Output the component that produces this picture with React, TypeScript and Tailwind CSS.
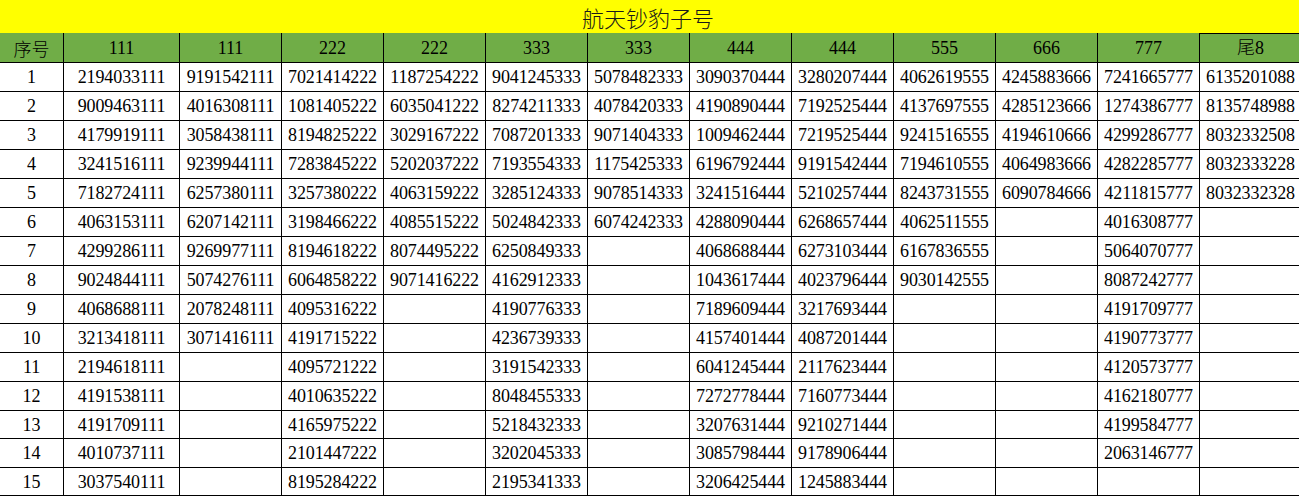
const headers = ["序号", "111", "111", "222", "222", "333", "333", "444", "444", "555", "666", "777", "尾8"];

const rows: string[][] = [
  ["1", "2194033111", "9191542111", "7021414222", "1187254222", "9041245333", "5078482333", "3090370444", "3280207444", "4062619555", "4245883666", "7241665777", "6135201088"],
  ["2", "9009463111", "4016308111", "1081405222", "6035041222", "8274211333", "4078420333", "4190890444", "7192525444", "4137697555", "4285123666", "1274386777", "8135748988"],
  ["3", "4179919111", "3058438111", "8194825222", "3029167222", "7087201333", "9071404333", "1009462444", "7219525444", "9241516555", "4194610666", "4299286777", "8032332508"],
  ["4", "3241516111", "9239944111", "7283845222", "5202037222", "7193554333", "1175425333", "6196792444", "9191542444", "7194610555", "4064983666", "4282285777", "8032333228"],
  ["5", "7182724111", "6257380111", "3257380222", "4063159222", "3285124333", "9078514333", "3241516444", "5210257444", "8243731555", "6090784666", "4211815777", "8032332328"],
  ["6", "4063153111", "6207142111", "3198466222", "4085515222", "5024842333", "6074242333", "4288090444", "6268657444", "4062511555", "", "4016308777", ""],
  ["7", "4299286111", "9269977111", "8194618222", "8074495222", "6250849333", "", "4068688444", "6273103444", "6167836555", "", "5064070777", ""],
  ["8", "9024844111", "5074276111", "6064858222", "9071416222", "4162912333", "", "1043617444", "4023796444", "9030142555", "", "8087242777", ""],
  ["9", "4068688111", "2078248111", "4095316222", "", "4190776333", "", "7189609444", "3217693444", "", "", "4191709777", ""],
  ["10", "3213418111", "3071416111", "4191715222", "", "4236739333", "", "4157401444", "4087201444", "", "", "4190773777", ""],
  ["11", "2194618111", "", "4095721222", "", "3191542333", "", "6041245444", "2117623444", "", "", "4120573777", ""],
  ["12", "4191538111", "", "4010635222", "", "8048455333", "", "7272778444", "7160773444", "", "", "4162180777", ""],
  ["13", "4191709111", "", "4165975222", "", "5218432333", "", "3207631444", "9210271444", "", "", "4199584777", ""],
  ["14", "4010737111", "", "2101447222", "", "3202045333", "", "3085798444", "9178906444", "", "", "2063146777", ""],
  ["15", "3037540111", "", "8195284222", "", "2195341333", "", "3206425444", "1245883444", "", "", "", ""],
];

// Excel row heights: rows 13 and 15 are a pixel shorter
const rowHeights = [
  "h-[29px]", "h-[29px]", "h-[29px]", "h-[29px]", "h-[29px]", "h-[29px]", "h-[29px]", "h-[29px]",
  "h-[29px]", "h-[29px]", "h-[29px]", "h-[29px]", "h-[28px]", "h-[29px]", "h-[28px]",
];

const colWidths = ["w-[64px]", "w-[116px]", "w-[102px]", "w-[102px]", "w-[102px]", "w-[102px]", "w-[102px]", "w-[102px]", "w-[102px]", "w-[102px]", "w-[102px]", "w-[102px]", "w-[102px]"];

const font = "font-['Liberation_Serif','Noto_Sans_CJK_SC',serif]";

export default function App() {
  return (
    <div className={`w-[1299px] h-[497px] overflow-hidden bg-white text-black ${font}`}>
      <div className="w-[1302px]">
        <div className="h-[33px] bg-[#ffff00] flex items-center justify-center">
          <span className="font-['Noto_Sans_CJK_SC',sans-serif] font-light text-[22px] leading-none text-[#1a1a1a] ml-[-6px]">
            航天钞豹子号
          </span>
        </div>
        <div className="flex h-[30px] bg-[#70ad47]">
          {headers.map((h, i) => (
            <div
              key={i}
              className={`${colWidths[i]} shrink-0 flex items-center justify-center border-r border-b border-black text-[18px] leading-none font-light ${
                i === headers.length - 1 ? "border-t" : ""
              } ${i === 0 ? "text-[17px] font-['Noto_Sans_CJK_SC',sans-serif]" : ""}`}
            >
              {h}
            </div>
          ))}
        </div>
        {rows.map((row, r) => (
          <div key={r} className={`flex ${rowHeights[r]}`}>
            {row.map((cell, i) => (
              <div
                key={i}
                className={`${colWidths[i]} shrink-0 flex items-center justify-center border-r border-b border-black text-[18px] leading-none tracking-[-0.1px]`}
              >
                {cell}
              </div>
            ))}
          </div>
        ))}
      </div>
    </div>
  );
}
